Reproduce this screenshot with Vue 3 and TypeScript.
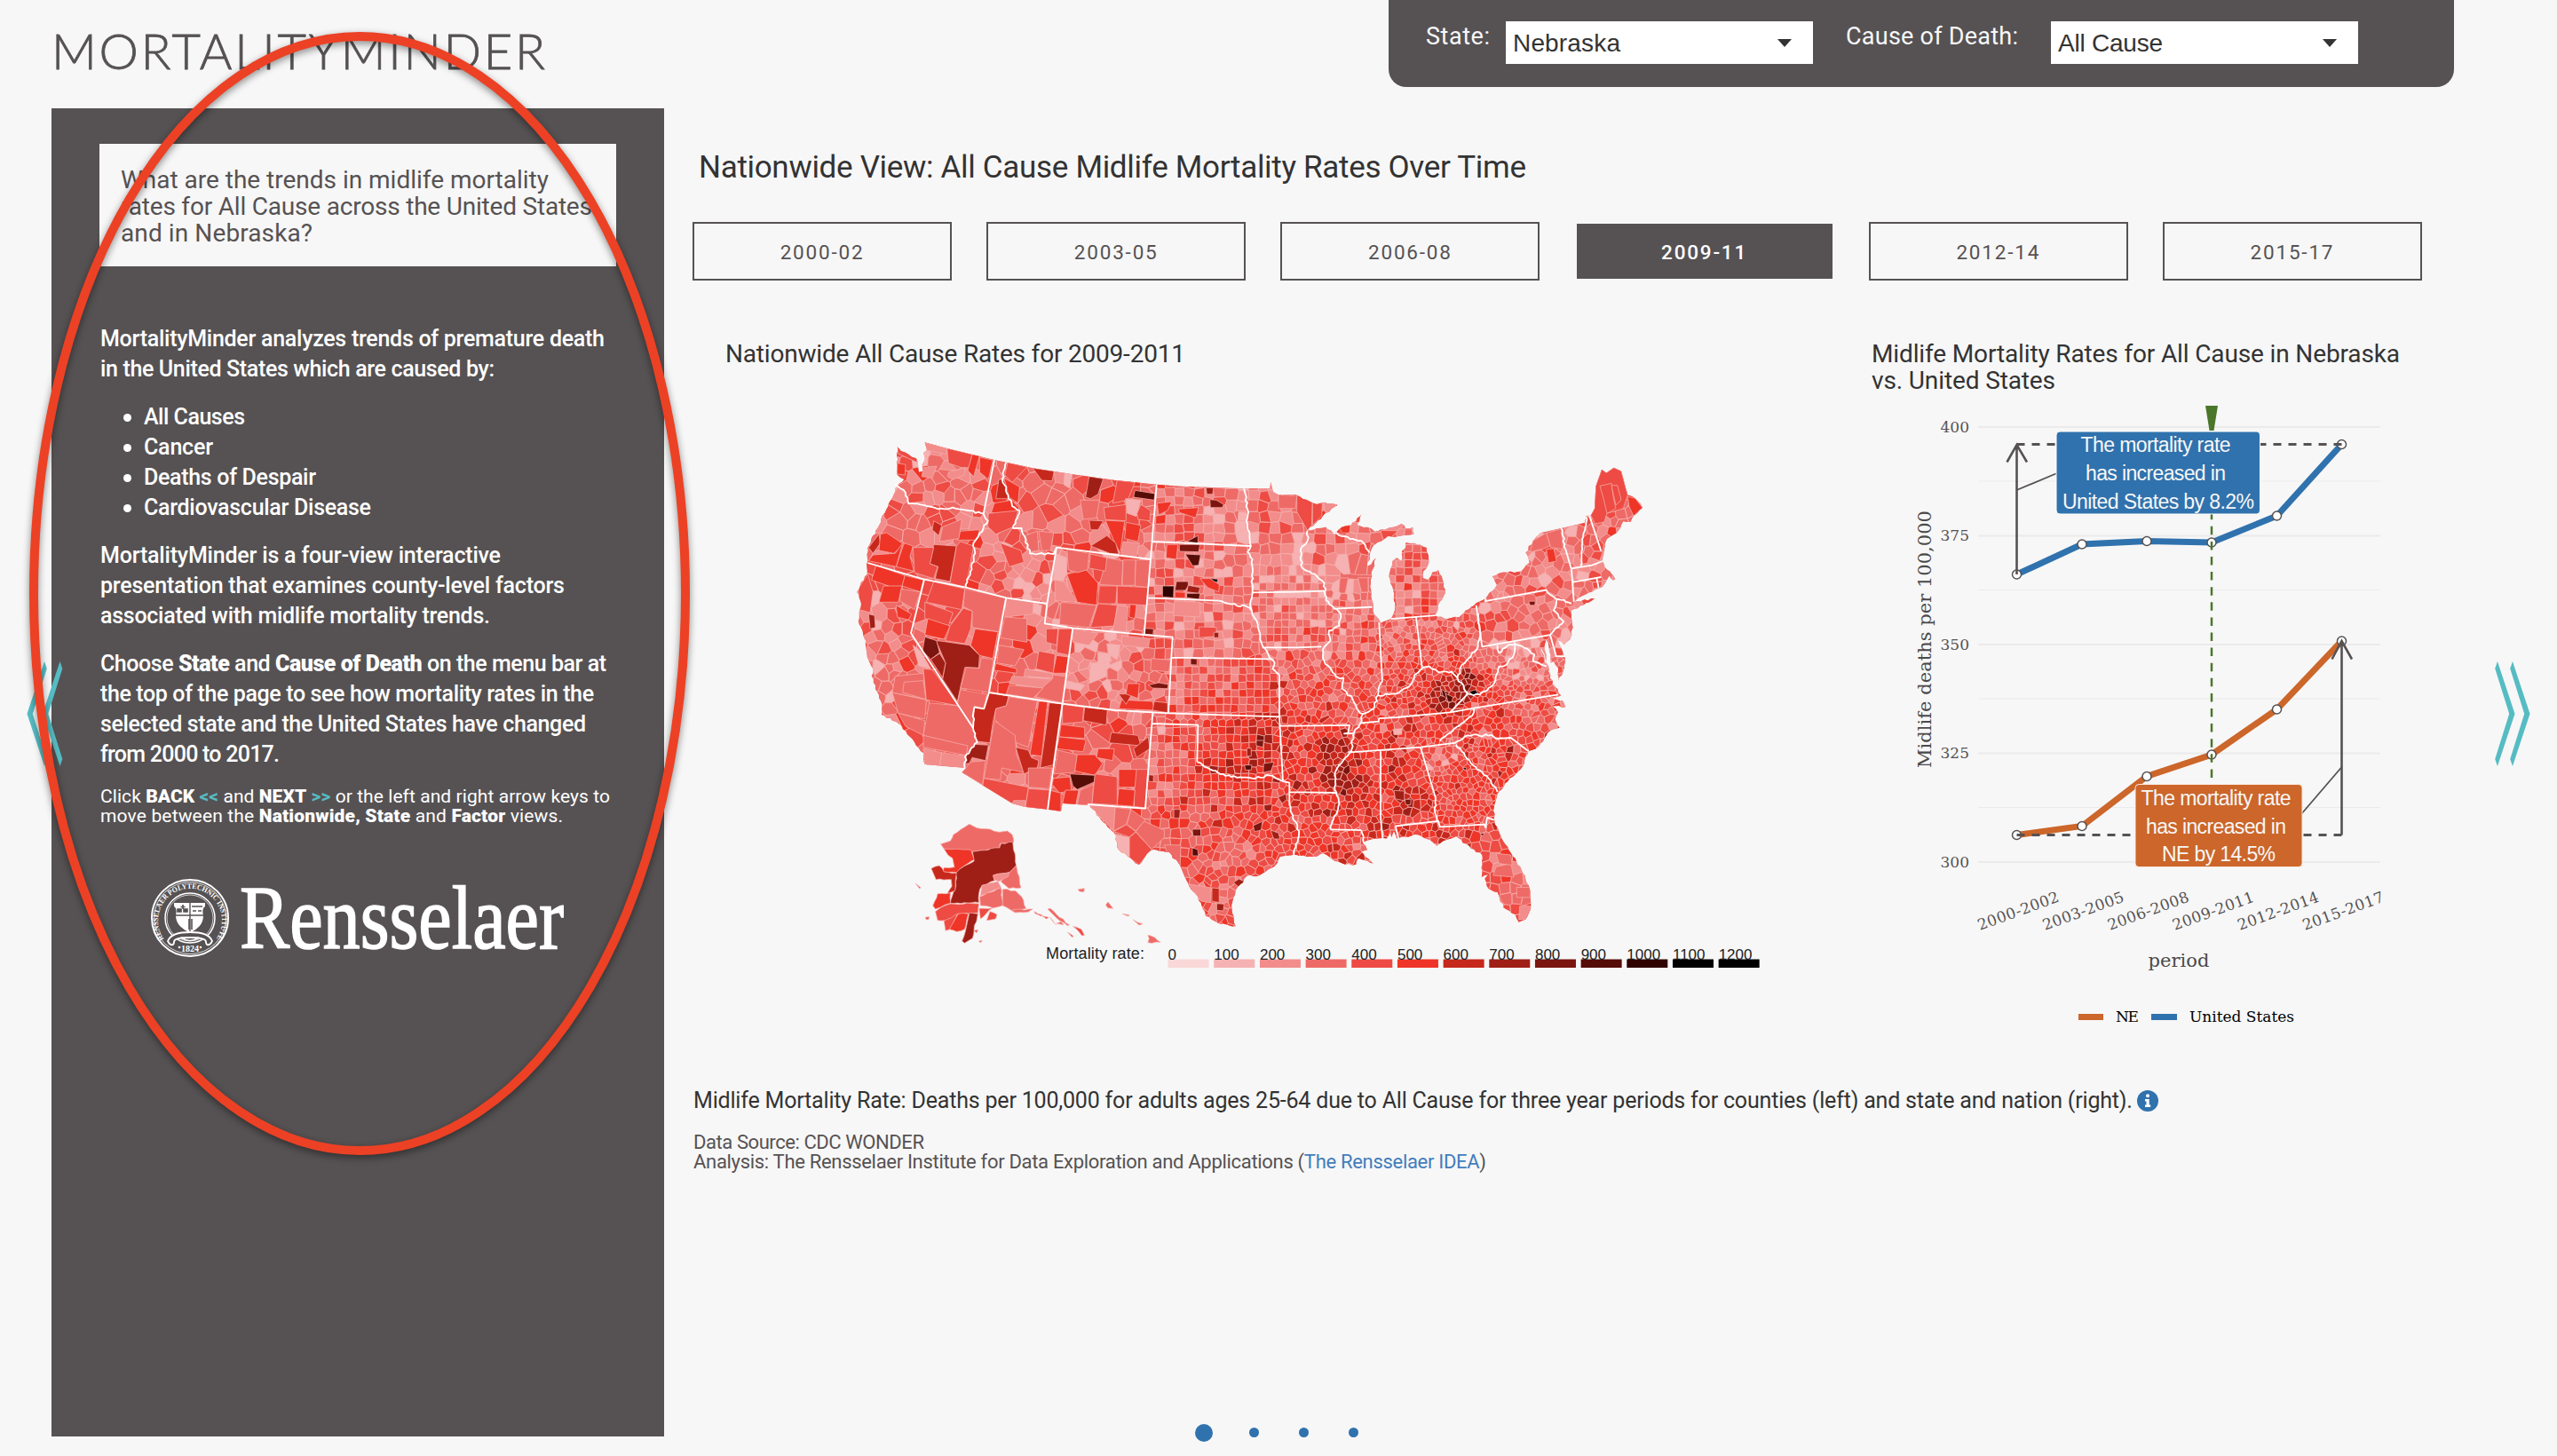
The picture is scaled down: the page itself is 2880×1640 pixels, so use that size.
<script setup lang="ts">
type Pt = [number, number]

/* Stretches or tightens a line of text to the given width in pixels. */
const vFit = {
  mounted(el: HTMLElement, binding: { value: number }) {
    const n = (el.textContent ?? '').trim().length
    const w = el.getBoundingClientRect().width
    if (n > 1) el.style.letterSpacing = `${((binding.value - w) / (n - 1)).toFixed(3)}px`
  },
}

const periods = ['2000-02', '2003-05', '2006-08', '2009-11', '2012-14', '2015-17']
const activePeriod = '2009-11'
const causes = [
  { name: 'All Causes', w: 114 },
  { name: 'Cancer', w: 78 },
  { name: 'Deaths of Despair', w: 194 },
  { name: 'Cardiovascular Disease', w: 256 },
]

/* ---------- map ---------- */
const scale = ['#fad8d8', '#f6b2b2', '#f28d8c', '#ee6a66', '#ed4b43', '#ee3527', '#c6281c', '#9f1f16', '#7b150f', '#560c07', '#300300', '#000000']
const legend = [...scale, '#000000'].map((color, i) => ({ color, label: String(i * 100), x: 1315.6 + i * 51.67 }))

/* Geometry is kept on three sheets, each with its own origin and scale. */
const sheets: Record<string, [number, number, number, number]> = {
  A: [940, 460, 3, 3],
  B: [1440, 500, 3, 2.6133],
  C: [940, 860, 2.8, 3],
}
function pts(src: string): Pt[] {
  let s = sheets.A
  const out: Pt[] = []
  for (const t of src.trim().split(/\s+/)) {
    if (sheets[t]) { s = sheets[t]; continue }
    const [x, y] = t.split(',').map(Number)
    out.push([s[0] + x / s[2], s[1] + y / s[3]])
  }
  return out
}
const line = (p: Pt[]) => 'M' + p.map(q => `${q[0].toFixed(1)} ${q[1].toFixed(1)}`).join('L')

let seed = 20117
function rnd() {
  seed = (seed + 0x6d2b79f5) | 0
  let t = Math.imul(seed ^ (seed >>> 15), 1 | seed)
  t = (t + Math.imul(t ^ (t >>> 7), 61 | t)) ^ t
  return ((t ^ (t >>> 14)) >>> 0) / 4294967296
}
/* Adds small kinks so that coasts and rivers are not ruler-straight. */
function rough(p: Pt[], amp: number, minLen: number): Pt[] {
  const out: Pt[] = []
  for (let i = 0; i < p.length - 1; i++) {
    out.push(p[i])
    const dx = p[i + 1][0] - p[i][0], dy = p[i + 1][1] - p[i][1]
    const len = Math.hypot(dx, dy)
    const n = Math.floor(len / minLen)
    for (let k = 1; k < n; k++) {
      const o = (rnd() - 0.5) * amp
      out.push([p[i][0] + (dx * k) / n - (dy / len) * o, p[i][1] + (dy * k) / n + (dx / len) * o])
    }
  }
  out.push(p[p.length - 1])
  return out
}

const coast: [string, boolean][] = [
  ['A 212,130 225,145 250,155 275,168 282,190 285,215 297,212 295,190 305,168 300,150 312,140 305,115', true],
  ['A 305,115 380,135 540,174 580,182 670,202 800,222 950,243 1088,257 1170,263 1300,268 1383,271 1470,271 1474,248 1482,282 1500,292 1540,298 1560,292', false],
  ['B 0,150 35,155 60,150 95,165 130,178 155,172 200,180 150,212 98,255 130,248 160,245 185,262 215,245 245,240 282,205 265,238 300,245 325,258 360,252 400,242 415,235 430,248 455,245 458,265 420,270 370,272 335,290 320,300 308,330 300,360 313,355 330,335 318,370 312,410 316,460 322,500 345,527 380,515 394,480 390,440 378,410 375,380 385,345 400,335 415,345 418,315 430,305 430,290 460,292 500,305 508,350 490,375 488,395 505,400 520,378 540,372 552,390 563,440 545,465 540,485 528,505 570,515 610,510 650,480 700,455 738,415 722,390 760,378 820,375 848,350 835,320 860,285 885,262', true],
  ['B 885,262 955,248 1035,232 1040,212 1055,210 1068,190 1072,125 1092,75 1108,85 1133,70 1158,80 1180,150', false],
  ['B 1180,150 1205,160 1230,188 1200,212 1190,230 1165,228 1150,255 1110,280 1100,315 1095,345 1110,370 1138,398 1132,402 1118,388 1110,400 1095,420 1060,435 1020,450 1000,465 1068,455 1030,475 990,490 995,540 985,575 965,592 945,578 955,600 968,630 965,660 945,698 945,660 930,640 920,645 915,610 905,575 898,600 905,640 893,610 888,600 900,640 910,650 918,690 935,715 955,740 925,750 960,755 970,775 925,772 945,790 935,810 950,835 910,850 880,890 845,905 825,950 765,1000 740,1030 728,1070 730,1110 760,1170 800,1220 835,1280 852,1320 852,1370 835,1400 812,1408 800,1385 760,1365 740,1320 710,1310 697,1280 708,1268 686,1275 688,1210 650,1190 600,1155 570,1165 535,1183 510,1165 460,1150 400,1162 390,1140 383,1158 375,1140 365,1162 320,1163 285,1175 300,1195 280,1200 320,1235 270,1220 262,1238 225,1238 190,1228 150,1205 120,1215 60,1210 30,1212 C 1450,308 1405,315 1390,345 1340,378 1300,380 1265,430 1252,480 1265,550 1210,540 1170,515 1155,470 1115,405 1090,345 1055,300 1005,290 985,305 960,342 925,315 895,290 882,235 840,190 802,138', true],
  ['A 855,1340 770,1335 765,1362 720,1355 645,1347 600,1335 430,1230 445,1215 305,1203', false],
  ['A 305,1203 300,1165 255,1110 215,1065 158,1035 160,1000 125,905 130,880 110,840 105,785 80,720 90,660 75,620 110,560 112,470 150,395 190,310 205,270 235,240 212,225 212,130', true],
]
const outline = line(coast.flatMap(([s, r]) => (r ? rough(pts(s), 2.2, 3.5) : pts(s)))) + 'Z'

const straightBorders = [
  'A 540,174 503,356', 'A 112,522 303,578 443,605 580,640 718,660', 'A 303,578 258,760 468,1080',
  'A 472,1010 505,1015 522,960', 'A 580,638 522,960', 'A 522,960 770,998 950,1020 1128,1030', 'A 770,998 720,1355',
  'A 805,742 770,998', 'A 718,660 710,727 805,742 1046,765', 'A 750,470 718,660', 'A 750,470 1068,510 1046,765',
  'A 1088,257 1068,510', 'A 1073,450 1405,465', 'A 1058,640 1300,650', 'A 1046,765 1142,773 1138,842 1480,847',
  'A 1412,622 1560,620 B 155,433', 'A 1445,808 1560,808 B 145,597', 'A 1138,842 1128,1030 1503,1042 1503,900',
  'A 1070,1065 1228,1070 1225,1195', 'A 1075,1030 1050,1352 855,1338', 'A 1503,1042 1515,1260 1537,1265 1537,1340',
  'A 1503,1073 1560,1073 B 240,828 235,851 222,853 255,852', 'B 185,485 316,480', 'B 340,525 350,690',
  'B 465,510 485,660', 'B 380,515 530,505', 'B 668,475 688,597 918,562', 'B 700,455 698,463 905,430',
  'B 918,562 938,625 968,625', 'B 275,822 338,817 340,808 400,805 580,790 660,778 945,738', 'B 235,908 480,893 600,880',
  'B 720,857 735,868 785,865 845,905', 'B 480,893 530,1040', 'B 345,905 345,1100 352,1160', 'B 395,1125 540,1110 545,1127 695,1120 700,1130 705,1100 728,1107',
  'B 395,1125 405,1160', 'B 175,1135 280,1137', 'B 38,1025 195,1027', 'B 1050,210 1090,315', 'B 990,367 1060,357 1095,345',
  'B 995,407 1090,392', 'B 1075,395 1082,425', 'B 970,310 990,370 998,465', 'B 580,790 640,735',
].map(s => line(pts(s))).join('')
const riverBorders = [
  'A 205,258 240,285 250,322 290,325 350,340 400,335 450,345 503,356', 'A 503,356 518,380 480,440 468,465 475,490 443,605',
  'A 468,1080 482,1128 445,1170 440,1215', 'A 468,1080 472,1010', 'A 580,182 567,240 600,330 625,345 603,405 632,405 660,490 740,492 750,470',
  'A 1300,650 1340,662 1390,668 1410,685 1430,730 1445,800 1487,860 1480,880 1503,900', 'A 1383,271 1395,340 1395,400 1407,465 1395,485 1412,510 1410,640 1405,670 1410,685',
  'A 1225,1195 1270,1220 1340,1245 1410,1250 1470,1240 1515,1260', 'A 1537,1340 B 40,1080 70,1140 52,1210',
  'B 98,255 98,285 75,310 80,365 130,390 155,410 160,460 210,500 205,535 170,550 175,580 150,605 155,640 195,685 220,690 215,720 250,750 270,785 285,795 275,825 255,850 245,905 195,960 190,1010 205,1060 175,1135',
  'B 185,262 215,272 280,285 308,320', 'B 350,690 335,740', 'B 285,795 320,780 335,740 400,735 440,715 460,680 485,660 510,655 540,672 585,670 605,690 620,650 670,605 680,570 675,500',
  'B 905,430 935,455 990,470', 'B 940,458 930,490 963,522 918,562', 'B 740,593 745,615 780,590 800,590 795,620 770,650 745,655 725,710 680,738 640,735 605,690',
  'B 795,585 830,600 865,620 860,640 905,655', 'B 660,778 655,800 610,830 545,875', 'B 595,880 640,858 720,857', 'B 600,885 650,940 710,985 740,1025',
  'B 530,1040 528,1080 542,1115', 'B 280,1137 288,1175', 'B 955,248 970,310', 'B 1040,215 1035,255 1025,300 1022,360',
].map(s => line(rough(pts(s), 2.4, 3))).join('')

/* County seeds: x0, y0, x1, y1, step x, step y, jitter. Earlier zones win. */
const zones = [
  [1758, 523, 1855, 690, 11, 10, 0.4], [1660, 590, 1775, 730, 11, 10, 0.4], [1563, 605, 1632, 700, 9.4, 8.6, 0.08],
  [1380, 540, 1563, 640, 12.5, 12, 0.22], [1410, 640, 1500, 735, 8.3, 8.3, 0.08], [1290, 540, 1410, 742, 11, 10, 0.14],
  [1316, 742, 1440, 810, 8.8, 8.6, 0.08], [1295, 810, 1440, 915, 8.6, 8.8, 0.14], [1230, 900, 1340, 1050, 11, 11, 0.14],
  [1340, 905, 1425, 1050, 9.2, 9, 0.42], [1550, 700, 1760, 790, 6.8, 6.6, 0.4], [1600, 835, 1690, 935, 6.8, 6.6, 0.4],
  [1655, 935, 1740, 1045, 12, 12, 0.25], [1424, 735, 1855, 1045, 8.2, 8, 0.34], [1500, 660, 1760, 760, 8.2, 8, 0.2],
  [1000, 490, 1110, 600, 14, 13, 0.42], [1110, 600, 1210, 690, 13, 11, 0.42], [960, 690, 1040, 800, 13, 11, 0.42],
  [1200, 700, 1316, 810, 13, 11, 0.35], [940, 480, 1316, 940, 20, 17, 0.38],
]
/* Local departures from the national average: x, y, radius, shift. */
const blobs = [
  [1632, 785, 17, 3.2], [1656, 768, 12, 3], [1512, 868, 16, 1.9], [1504, 835, 13, 1.4], [1514, 885, 12, 1.3], [1580, 903, 26, 1.2], [1570, 880, 110, 0.8],
  [1693, 862, 26, 1.1], [1645, 900, 40, 0.7], [1480, 690, 65, -0.9], [1460, 630, 35, -0.7], [1623, 860, 13, -2.4],
  [1715, 735, 24, -1.4], [1405, 843, 32, 1.6], [1240, 745, 28, -1.4], [1760, 660, 70, -0.5], [1370, 850, 90, 0.5], [1600, 795, 40, 0.7],
  [1400, 930, 50, 0.6], [1350, 720, 60, -0.5], [1345, 590, 60, -0.4], [1460, 790, 60, 0.5], [1500, 920, 60, 0.7], [1385, 960, 24, -0.9],
  [1000, 730, 40, -0.4], [1150, 650, 40, -0.4], [1060, 550, 70, -0.25], [1570, 620, 40, -0.2], [1750, 790, 60, 0.4], [1595, 625, 12, 1.2], [1540, 700, 60, 0.1], [1680, 1000, 50, 0.2],
]
function cells(): string[] {
  const sites: { x: number; y: number; s: number; c: number }[] = []
  zones.forEach(([x0, y0, x1, y1, sx, sy, j], zi) => {
    let row = 0
    for (let y = y0 + sy / 2; y < y1; y += sy, row++) {
      for (let x = x0 + sx / 2 + (j > 0.3 && row % 2 ? sx / 2 : 0); x < x1; x += sx) {
        if (zones.slice(0, zi).some(z => x > z[0] && x < z[2] && y > z[1] && y < z[3])) continue
        let m = 3.15
        for (const [bx, by, r, v] of blobs) m += v * Math.exp(-((x - bx) ** 2 + (y - by) ** 2) / (2 * r * r))
        m += (rnd() + rnd() + rnd() - 1.5) * 1.7
        sites.push({ x: x + (rnd() - 0.5) * 2 * j * sx, y: y + (rnd() - 0.5) * 2 * j * sy, s: Math.max(sx, sy), c: Math.max(1, Math.min(10, Math.round(m))) })
      }
    }
  })
  const out = scale.map(() => '')
  for (const a of sites) {
    const r = a.s * 1.5
    let poly: Pt[] = [[a.x - r, a.y - r], [a.x + r, a.y - r], [a.x + r, a.y + r], [a.x - r, a.y + r]]
    for (const b of sites) {
      const dx = b.x - a.x, dy = b.y - a.y
      if (b === a || Math.abs(dx) > 3.4 * a.s || Math.abs(dy) > 3.4 * a.s) continue
      const k = (dx * (a.x + b.x) + dy * (a.y + b.y)) / 2
      const next: Pt[] = []
      for (let i = 0; i < poly.length; i++) {
        const p = poly[i], q = poly[(i + 1) % poly.length]
        const dp = p[0] * dx + p[1] * dy - k, dq = q[0] * dx + q[1] * dy - k
        if (dp <= 0) next.push(p)
        if (dp < 0 !== dq < 0 && dp !== dq) {
          const t = dp / (dp - dq)
          next.push([p[0] + (q[0] - p[0]) * t, p[1] + (q[1] - p[1]) * t])
        }
      }
      poly = next
      if (poly.length < 3) break
    }
    if (poly.length > 2) out[a.c] += line(poly) + 'Z'
  }
  return out
}
const countyPaths = cells()

/* Large counties drawn individually: rate class, then the ring. */
const bigCounties = (`4 A 380,135 465,155 455,200 430,200 385,185|5 A 465,155 490,160 470,230 450,210|5 A 490,165 535,175 520,240 490,215|2 A 305,115 380,135 378,155 305,140
2 A 300,200 345,195 330,235 295,230|2 A 385,215 440,200 440,225 400,240 382,230|4 A 212,130 280,170 278,182 214,152|5 A 212,185 240,190 238,225 212,222|4 A 585,183 650,198 600,250 575,225
6 A 670,202 742,212 735,245 700,243|2 A 742,212 778,218 775,255 745,250|1 A 778,218 803,222 795,270 775,258|7 A 860,230 908,238 890,290 865,305 848,300|4 A 955,243 1015,250 990,310 940,320|9 A 1015,277 1082,288 1080,310 1010,300
1 A 983,305 1035,310 1020,365 990,355|4 A 1035,325 1068,345 1065,380 1025,375 1022,355|5 A 985,385 1035,395 1025,450 980,440|6 A 860,378 908,380 890,410 865,410|5 A 915,378 980,382 965,490 945,450|6 A 865,465 920,430 950,455 960,492 930,490|2 A 975,450 1030,455 1020,503 968,497|3 A 830,310 895,310 885,370 840,375|4 A 910,335 985,325 985,380 915,376
6 A 555,240 570,240 620,320 580,305 545,305|5 A 540,320 600,310 625,340 570,375 530,350|4 A 520,355 620,345 605,400 545,425 518,400|5 A 572,235 625,265 620,320 590,300|3 A 645,430 685,415 690,480 660,485|3 A 690,415 740,420 730,480 700,480|4 A 560,455 630,480 640,520 590,535
6 A 335,460 412,465 390,585 340,575 350,535 322,525|5 A 235,455 265,465 255,500 268,550 208,535|4 A 265,470 335,470 322,525 348,535 335,575 270,555|4 A 425,450 470,465 443,605 390,590 412,466|6 A 115,470 150,425 155,455 130,490|6 A 335,380 362,395 352,430 330,410|5 A 155,425 175,420 235,460 200,490 150,480|5 A 425,415 490,410 480,445 415,445|5 A 130,495 205,490 230,455 208,535 115,515|3 A 365,400 430,375 420,440 355,450
5 A 140,530 238,565 225,615 125,580|5 A 238,565 300,580 290,620 228,600|5 A 165,600 228,600 215,655 150,655|3 A 225,610 290,620 270,680 220,650|7 A 115,695 135,700 138,740 120,745|4 A 80,610 112,560 130,620 120,690 85,680|5 A 208,665 260,695 250,715 212,705
4 A 300,880 330,883 420,1005 310,985|1 A 265,800 290,820 325,880 285,870|3 A 320,995 420,1005 468,1075 480,1125 450,1165 300,1105|3 A 195,960 310,985 305,1050 215,1030|3 A 215,1030 305,1055 300,1105 240,1075|3 A 300,1105 450,1140 445,1172 300,1145|2 A 300,1150 362,1163 355,1210 305,1203|2 A 362,1163 450,1175 440,1215 356,1210|3 A 205,905 300,895 308,983 195,960|3 A 235,925 300,920 308,983 230,960
4 A 335,585 440,610 430,680 310,655|3 A 440,610 578,640 555,755 465,740 465,685 435,670|4 A 305,655 400,690 385,735 305,710|5 A 315,710 390,735 370,780 305,765|5 A 475,745 552,755 535,845 490,835 460,800|4 A 390,735 435,675 465,685 460,745 440,795 375,785|8 A 305,772 345,785 355,825 325,848 297,820|7 A 350,785 455,800 490,835 487,877 440,875 415,990 365,915 375,860 345,790|7 A 325,848 355,828 375,860 365,910|3 A 445,875 490,878 495,843 537,848 520,960 425,945|3 A 425,950 515,965 505,1015 472,1005 468,1075 415,1000
2 A 580,640 680,655 670,695 575,705|3 A 575,705 650,710 650,790 560,775|3 A 555,800 640,815 610,870 548,860|5 A 545,862 615,880 615,895 540,885|4 A 690,820 745,830 740,895 680,880|5 A 750,835 790,840 782,895 738,895|3 A 735,900 782,905 770,995 680,975|2 A 645,880 735,895 738,912 640,905|2 A 600,905 735,915 700,945 590,930|3 A 590,935 705,945 670,980 580,965|1 A 672,658 700,665 695,700 670,690|4 A 757,745 803,745 795,835 750,825|4 A 715,745 755,745 750,800 715,790
1 A 745,490 785,505 785,560 770,585 738,580|2 A 745,580 775,585 820,655 745,650|5 A 785,560 850,545 890,590 885,665 820,655|3 A 785,475 860,490 855,545 820,555 790,545|3 A 765,655 885,665 860,740 760,730|4 A 895,600 955,600 950,660 890,660|4 A 890,660 955,665 945,735 865,740|3 A 920,505 975,515 970,600 895,595|2 A 958,665 992,670 985,755 940,750|3 A 975,512 1018,512 1015,598 972,598|3 A 1018,512 1066,512 1060,605 1015,600|4 A 955,600 1060,605 1055,665 955,660|5 A 998,662 1020,664 1015,710 995,705|4 A 865,492 920,505 915,550 860,540
1 A 865,860 915,860 920,905 860,930|2 A 805,745 890,760 860,800 805,790|1 A 890,825 930,830 935,855 890,860|8 A 1060,935 1095,927 1128,933 1125,947 1075,945|5 A 970,985 1075,990 1080,1020 960,1015|6 A 1080,990 1125,995 1125,1028 1075,1020|6 A 960,965 1005,965 985,1000|5 A 990,930 1030,930 1025,980 985,965|1 A 785,920 845,935 830,955 780,945|1 A 920,795 965,800 955,850 925,830|3 A 1070,845 1135,850 1130,890 1068,885|2 A 970,768 1065,778 1060,810 970,800
6 A 522,960 588,972 580,1005 545,1015 535,1060 525,1130 482,1125 468,1080 472,1010 505,1015|7 A 470,1135 520,1138 510,1190 465,1180 455,1200 442,1200 445,1170|5 A 690,990 720,990 700,1175 660,1170|6 A 725,995 768,998 738,1205 695,1215 715,1080|3 A 590,975 685,988 655,1145 615,1130 540,1050 545,1015 580,1005|3 A 540,1055 610,1105 615,1170 640,1230 565,1215 560,1255 505,1250 525,1140|6 A 612,1145 655,1155 665,1180 690,1190 685,1215 640,1235|4 A 505,1250 655,1280 645,1347 600,1335 500,1275|3 A 430,1230 460,1195 510,1190 500,1272|3 A 655,1215 735,1215 725,1285 655,1280|4 A 655,1285 728,1290 720,1357 645,1347|2 A 605,1325 645,1325 643,1347 600,1336
4 A 770,1000 842,1010 838,1060 770,1065|6 A 845,1010 922,1018 918,1070 840,1055|5 A 765,1068 845,1078 845,1115 760,1110|5 A 760,1110 850,1120 840,1160 750,1150|6 A 935,1095 1025,1105 1035,1140 928,1130|6 A 1060,1110 1065,1150 1020,1180 1010,1150|3 A 755,1155 820,1170 812,1230 742,1235|5 A 820,1170 880,1170 905,1200 880,1240 812,1225|5 A 890,1150 945,1150 940,1190 885,1180|5 A 740,1250 795,1245 800,1290 760,1300 735,1270|9 A 795,1235 880,1240 878,1262 820,1288 805,1275|5 A 725,1290 765,1300 765,1362 722,1357|5 A 780,1290 825,1290 815,1340 770,1335|3 A 830,1290 875,1270 870,1340 820,1340|4 A 880,1235 955,1245 955,1340 870,1335|4 A 1015,1220 1058,1220 1050,1350 1012,1345|5 A 960,1220 1020,1220 1015,1280 960,1280|5 A 960,1285 1015,1290 1010,1345 955,1340
9 A 1190,450 1228,430 1228,455|8 A 1165,460 1235,460 1230,485 1165,483|9 A 1185,492 1237,495 1230,530 1210,532|11 A 1270,575 1295,577 1293,588 1275,586|10 A 1108,600 1147,600 1145,640 1108,637|8 A 1155,585 1195,585 1195,600 1185,615 1150,615|7 A 1195,598 1235,605 1230,625 1190,620|9 A 1190,625 1235,625 1232,645 1190,640|5 A 1150,620 1185,622 1185,640 1150,640|5 A 1235,575 1268,575 1300,595 1298,620 1260,605|8 A 1268,308 1290,310 1315,325 1310,335 1270,335|7 A 1255,268 1280,268 1278,290 1258,290|5 A 1162,340 1230,335 1220,370 1165,352|5 A 1090,320 1140,315 1125,345 1095,360|5 A 1123,460 1160,460 1155,510 1120,505|2 A 1148,650 1235,655 1235,705 1145,700|8 A 1050,743 1078,745 1076,765 1048,763|4 A 1232,738 1290,740 1290,770 1232,775|7 A 1282,757 1298,757 1298,775 1282,775|1 A 1365,350 1392,350 1392,378 1363,378
8 A 1203,845 1225,847 1225,867 1203,866|7 A 1062,1238 1078,1240 1077,1262 1061,1260|8 A 1425,1122 1450,1122 1448,1145 1425,1140|8 A 1450,1200 1485,1195 1475,1225 1448,1230|9 A 1385,1205 1410,1205 1408,1222 1388,1222|7 A 1393,1148 1408,1148 1408,1175 1393,1175
2 C 802,138 885,148 880,228 845,190|3 C 885,148 935,155 920,205 880,228|4 C 880,230 920,207 950,230 930,248|1 C 880,238 930,250 930,318 895,290|4 C 930,250 950,232 1000,290 960,342 930,318|3 C 950,230 975,195 1040,225 1040,250 1000,290|3 C 935,155 980,190 950,228 922,205|8 C 1128,222 1155,222 1155,245 1130,245|9 C 1128,285 1145,290 1148,312 1128,312|6 C 1190,420 1213,422 1213,470 1190,465|2 C 1118,408 1160,415 1188,420 1185,470 1155,465|7 C 1070,155 1090,155 1088,185 1070,185|3 C 1040,275 1092,275 1090,345 1050,305|7 C 1205,473 1228,475 1226,498 1205,496|7 C 1258,402 1275,390 1295,400 1275,418|8 C 1320,210 1350,195 1345,225 1325,230|7 C 1375,225 1400,235 1405,255 1385,255
11 B 645,729 665,724 675,735 658,741|11 B 622,953 635,953 632,962|10 B 680,1148 695,1146 690,1154|8 B 427,1046 448,1046 446,1062 430,1062|7 B 390,1020 425,1022 425,1050 395,1045|9 B 550,722 562,728 570,750 556,742|9 B 565,735 590,745 585,760 572,758|8 B 845,463 868,463 866,475 850,475|5 B 905,310 930,308 940,345 912,350
4 B 1055,210 1068,190 1072,125 1092,75 1108,85 1133,70 1158,80 1180,150 1165,190 1110,205 1100,230 1070,235|4 B 1086,124 1125,116 1132,160 1140,190 1110,205 1098,160|4 B 1125,122 1145,122 1158,165 1140,180 1132,150|5 B 1180,155 1205,160 1230,188 1200,212 1185,185|4 B 62,150 115,170 112,240 98,255 62,200|4 B 115,172 148,175 146,212 115,240|3 B 0,150 62,152 58,190 0,190|5 B 205,245 243,238 240,262 215,262|3 B 860,285 905,262 918,300 890,310 850,318|3 B 905,262 955,250 962,310 920,305|1 B 388,840 418,838 416,855 390,856|3 B 805,1305 850,1305 850,1335 805,1335|2 B 815,1360 850,1360 850,1398 812,1400|3 B 735,1245 785,1235 795,1275 725,1270|3 B 735,1205 785,1210 790,1240 745,1235`)
  .split(/[|\n]/).map(s => {
    const i = s.indexOf(' ')
    return { color: scale[Number(s.slice(0, i))], d: line(pts(s.slice(i + 1))) + 'Z' }
  })

/* Alaska and Hawaii */
const farStates = (`3 335,272 365,262 375,240 410,215 425,205 450,218 490,222 520,232 545,228 560,240 565,266 522,270 520,285 435,298 345,288
7 435,298 520,285 525,270 562,265 573,345 550,370 500,378 505,395 465,412 455,440 455,470 365,472 380,425 385,362 440,330
5 345,288 430,292 440,325 410,345 385,368 342,366 345,352 378,350 372,320 358,310
6 305,355 330,345 345,366 384,370 380,430 355,440 370,415 368,392 320,392
3 573,345 588,420 550,422 525,400 550,370
2 500,378 550,367 548,382 520,398 503,393
2 465,412 515,398 525,420 460,448
3 458,450 525,420 530,480 500,488 460,480
3 530,425 570,430 590,450 604,490 565,502 530,480
5 310,480 325,440 365,437 366,472 335,485 318,492
4 318,500 335,487 366,474 455,474 452,505 390,508 360,530 325,530
4 345,532 388,508 365,560 350,565
5 390,508 422,508 410,560 385,568 362,560
7 425,505 452,508 440,560 435,590 410,607 402,600 412,570
4 456,490 498,488 460,525
4 490,500 512,510 508,525 480,530
3 560,495 625,492 610,502 570,504
4 255,405 272,420 268,422
4 286,520 298,518 297,526 290,528
4 440,565 452,562 448,572
4 630,500 655,512 652,516 632,506
4 655,515 675,520 668,525
3 672,492 680,490 700,510 740,545 735,548 700,522
4 680,520 700,545 694,540
4 752,550 778,560 788,580 780,582 765,562
4 735,570 752,582 750,588
3 700,540 722,545 715,535
3 768,425 788,422 786,434 772,432
3 855,478 862,468 878,490 862,488
3 908,508 930,512 925,516
3 942,528 972,542 960,546
3 988,580 1010,588 1028,604 988,605 992,592
3 455,600 466,598 460,606`).split('\n').map(s => {
  const i = s.indexOf(' ')
  return { color: scale[Number(s.slice(0, i))], d: line(rough(pts('C ' + s.slice(i + 1)), 1.6, 4)) + 'Z' }
})

/* ---------- trend chart ---------- */
const xs = [2271.5, 2345, 2418, 2491, 2564.5, 2637.5]
const us = [647, 613, 609.5, 611, 581, 500.5]
const ne = [940.5, 930.5, 874.5, 850, 799, 722]
const poly = (ys: number[]) => ys.map((y, i) => `${xs[i]},${y}`).join(' ')
const ticks = [400, 375, 350, 325, 300].map((v, i) => ({ v, y: 481 + i * 122.5 }))
const minor = [542, 664.5, 787, 909.5]
const years = ['2000-2002', '2003-2005', '2006-2008', '2009-2011', '2012-2014', '2015-2017']
</script>

<template>
  <div class="page">
    <header class="top">
      <h1 class="brand"><span v-fit="556" class="ln">MORTALITYMINDER</span></h1>
      <form class="filters">
        <label class="lab lab-state"><span v-fit="72" class="ln">State:</span></label>
        <div class="select"><span v-fit="121" class="ln">Nebraska</span><i class="caret"></i></div>
        <label class="lab lab-cause"><span v-fit="194" class="ln">Cause of Death:</span></label>
        <div class="select"><span v-fit="118" class="ln">All Cause</span><i class="caret"></i></div>
      </form>
    </header>

    <div class="body">
      <aside class="side">
        <h2 class="question">
          <span v-fit="482" class="ln">What are the trends in midlife mortality</span>
          <span v-fit="531" class="ln">rates for All Cause across the United States</span>
          <span v-fit="216" class="ln">and in Nebraska?</span>
        </h2>
        <p class="para first">
          <span v-fit="568" class="ln">MortalityMinder analyzes trends of premature death</span>
          <span v-fit="444" class="ln">in the United States which are caused by:</span>
        </p>
        <ul class="causes">
          <li v-for="c in causes" :key="c.name"><span v-fit="c.w" class="ln">{{ c.name }}</span></li>
        </ul>
        <p class="para">
          <span v-fit="451" class="ln">MortalityMinder is a four-view interactive</span>
          <span v-fit="523" class="ln">presentation that examines county-level factors</span>
          <span v-fit="439" class="ln">associated with midlife mortality trends.</span>
        </p>
        <p class="para">
          <span v-fit="570" class="ln">Choose <b>State</b> and <b>Cause of Death</b> on the menu bar at</span>
          <span v-fit="556" class="ln">the top of the page to see how mortality rates in the</span>
          <span v-fit="547" class="ln">selected state and the United States have changed</span>
          <span v-fit="202" class="ln">from 2000 to 2017.</span>
        </p>
        <p class="hint">
          <span v-fit="574" class="ln">Click <b>BACK</b> <em>&lt;&lt;</em> and <b>NEXT</b> <em>&gt;&gt;</em> or the left and right arrow keys to</span>
          <span v-fit="521" class="ln">move between the <b>Nationwide, State</b> and <b>Factor</b> views.</span>
        </p>
        <svg class="rpi" viewBox="164 970 500 130" width="500" height="130">
          <defs>
            <path id="ringTop" d="M184.500 1057.500A36 36 0 1 1 243.500 1057.500" />
          </defs>
          <g fill="none" stroke="#fff">
            <circle cx="214" cy="1034" r="43" stroke-width="2" />
            <circle cx="214" cy="1034" r="40.500" stroke-width=".8" />
            <circle cx="214" cy="1034" r="28" stroke-width="1.500" />
            <circle cx="214" cy="1034" r="26" stroke-width=".7" />
          </g>
          <text class="seal"><textPath href="#ringTop" textLength="156" lengthAdjust="spacingAndGlyphs">RENSSELAER POLYTECHNIC INSTITUTE</textPath></text>
          <path d="M196 1017h35v4c-3 2-3 6-2 10 0 10-6 15-15 20-9-5-16-10-16-20 1-4 1-8-2-10z" fill="#fff" />
          <path d="M214 1017v34M198 1031h32" stroke="#565253" stroke-width="1.400" />
          <path d="M206 1019v5M203.500 1021.500h5M200 1024h4v3h-4zM207 1024h4v3h-4zM216 1021h12M217 1026h4M223 1026h4M213 1035v12M216 1035v12" stroke="#565253" stroke-width="1.600" fill="#565253" />
          <path d="M189 1060c3-8 12-10 25-10s22 2 25 10c-3 6-7 5-7 1 0-3-6-5-18-5s-18 2-18 5c0 4-4 5-7-1z" fill="#565253" stroke="#fff" stroke-width="1.800" />
          <path d="M204 1056q10 7 20 0" fill="none" stroke="#fff" stroke-width="1.600" />
          <circle cx="202" cy="1067" r="1.300" fill="#fff" /><circle cx="226" cy="1067" r="1.300" fill="#fff" />
          <text x="214" y="1072" class="seal year">1824</text>
          <text x="270" y="1067.500" class="wordmark" textLength="365" lengthAdjust="spacingAndGlyphs">Rensselaer</text>
        </svg>
      </aside>

      <main class="main">
        <h2 class="title"><span v-fit="932" class="ln">Nationwide View: All Cause Midlife Mortality Rates Over Time</span></h2>
        <nav class="tabs">
          <button v-for="p in periods" :key="p" type="button" class="tab" :class="{ on: p === activePeriod }">{{ p }}</button>
        </nav>

        <div class="charts">
          <section class="national">
            <h3><span v-fit="518" class="ln">Nationwide All Cause Rates for 2009-2011</span></h3>
            <svg viewBox="780 413 1240 700" width="1240" height="700">
              <defs><clipPath id="land"><path :d="outline" /></clipPath></defs>
              <g clip-path="url(#land)">
                <path :d="outline" fill="#ee6a66" />
                <g stroke="#f6aeab" stroke-width=".75" stroke-linejoin="round">
                  <path v-for="(d, i) in countyPaths" :key="i" :d="d" :fill="scale[i]" />
                  <path v-for="(c, i) in bigCounties" :key="'b' + i" :d="c.d" :fill="c.color" />
                </g>
              </g>
              <g stroke="#f6aeab" stroke-width=".7">
                <path v-for="(c, i) in farStates" :key="i" :d="c.d" :fill="c.color" />
              </g>
              <g fill="none" stroke="#fff" stroke-width="1.800" stroke-linejoin="round">
                <path :d="straightBorders" />
                <path :d="riverBorders" />
              </g>
              <g class="maplegend">
                <text x="1178" y="1080" textLength="111">Mortality rate:</text>
                <rect v-for="l in legend" :key="l.label" :x="l.x" y="1080.500" width="46" height="9.500" :fill="l.color" />
                <text v-for="l in legend" :key="'t' + l.label" :x="l.x" y="1080.500" class="num">{{ l.label }}</text>
              </g>
            </svg>
          </section>

          <section class="trend">
            <h3>
              <span v-fit="595" class="ln">Midlife Mortality Rates for All Cause in Nebraska</span>
              <span v-fit="207" class="ln">vs. United States</span>
            </h3>
            <svg viewBox="2109 443 619 720" width="619" height="720">
              <g stroke="#ebebeb">
                <line v-for="t in ticks" :key="t.v" x1="2228" x2="2681" :y1="t.y" :y2="t.y" stroke-width="2.200" />
                <line v-for="m in minor" :key="m" x1="2228" x2="2681" :y1="m" :y2="m" stroke-width="1.200" />
              </g>
              <g class="axis">
                <text v-for="t in ticks" :key="t.v" x="2218" :y="t.y + 5.500" text-anchor="end">{{ t.v }}</text>
                <text v-for="(y, i) in years" :key="y" :transform="`translate(${2230 + i * 73.2} 1048) rotate(-20)`" textLength="96">{{ y }}</text>
                <text class="name" transform="translate(2174.500 720) rotate(-90)" text-anchor="middle" textLength="290">Midlife deaths per 100,000</text>
                <text class="name" x="2454" y="1089" text-anchor="middle" textLength="69">period</text>
              </g>
              <polyline :points="poly(us)" fill="none" stroke="#3072ad" stroke-width="7" />
              <polyline :points="poly(ne)" fill="none" stroke="#cc662a" stroke-width="7" />
              <g fill="#fff" stroke="#565253" stroke-width="1.500">
                <circle v-for="(y, i) in us" :key="i" :cx="xs[i]" :cy="y" r="5" />
                <circle v-for="(y, i) in ne" :key="'n' + i" :cx="xs[i]" :cy="y" r="5" />
              </g>
              <g fill="none" stroke="#565253" stroke-width="2.800">
                <path d="M2271.500 500.500H2638M2271.500 940.500H2638" stroke-dasharray="9 8" />
                <path d="M2271.500 647V501M2260.500 520.500L2271.500 501L2283 520.500M2637.500 940.500V722M2626.500 742.500L2637.500 722L2649 742.500" stroke-width="2.600" />
                <path d="M2271.500 552L2318 532.500M2637.500 864L2592 917" stroke-width="1.800" />
              </g>
              <path d="M2491 887V500" stroke="#4b772b" stroke-width="2.500" stroke-dasharray="9.500 7.600" stroke-dashoffset="6" />
              <path d="M2484 457H2498L2493.500 485H2488.500Z" fill="#4b772b" />
              <rect x="2316" y="486" width="229.500" height="93" rx="4" fill="#3072ad" stroke="#fff" stroke-width="1" />
              <rect x="2405" y="883.500" width="188" height="93" rx="4" fill="#cc662a" stroke="#fbe9df" stroke-width="1" />
              <g class="note">
                <text x="2428" y="509" textLength="169">The mortality rate</text>
                <text x="2428" y="541" textLength="158">has increased in</text>
                <text x="2431" y="572.500" textLength="216">United States by 8.2%</text>
                <text x="2496" y="906.500" textLength="169">The mortality rate</text>
                <text x="2496" y="938.500" textLength="158">has increased in</text>
                <text x="2499" y="970" textLength="128">NE by 14.5%</text>
              </g>
              <path d="M2341 1145.500h28" stroke="#cc662a" stroke-width="7" />
              <path d="M2423 1145.500h29" stroke="#3072ad" stroke-width="7" />
              <g class="key">
                <text x="2383" y="1151" textLength="26">NE</text>
                <text x="2466" y="1151" textLength="118">United States</text>
              </g>
            </svg>
          </section>
        </div>

        <p class="foot">
          <span v-fit="1621" class="ln">Midlife Mortality Rate: Deaths per 100,000 for adults ages 25-64 due to All Cause for three year periods for counties (left) and state and nation (right).</span>
          <svg width="24" height="24" viewBox="0 0 24 24">
            <circle cx="12" cy="12" r="12" fill="#3072ad" />
            <circle cx="12" cy="6.300" r="2" fill="#fff" />
            <path d="M9 10h4.700v6.500h1.500V19H9v-2.500h1.500v-4H9z" fill="#fff" />
          </svg>
        </p>
        <div class="source">
          <span v-fit="260" class="ln">Data Source: CDC WONDER</span>
          <span v-fit="893" class="ln">Analysis: The Rensselaer Institute for Data Exploration and Applications (<a>The Rensselaer IDEA</a>)</span>
        </div>
        <div class="dots"><i class="dot big"></i><i class="dot"></i><i class="dot"></i><i class="dot"></i></div>
      </main>
    </div>

    <svg class="overlay" viewBox="0 0 2880 1640" width="2880" height="1640">
      <g fill="#56bcc3">
        <path d="M50 745L52.800 753L36.800 804L52.800 855L50 863L30.500 804Z" />
        <path d="M67.500 745L70.300 753L54.300 804L70.300 855L67.500 863L48 804Z" />
        <path d="M2813 745L2810.200 753L2826.200 804L2810.200 855L2813 863L2832.500 804Z" />
        <path d="M2830 745L2827.200 753L2843.200 804L2827.200 855L2830 863L2849.500 804Z" />
      </g>
      <ellipse class="ring" cx="405" cy="668.500" rx="367" ry="627.500" />
    </svg>
  </div>
</template>

<style>
body { margin: 0; background: #f7f7f7; }
</style>

<style scoped>
.page { position: relative; width: 2880px; height: 1640px; overflow: hidden; background: #f7f7f7; color: #333; font-family: Roboto, "Liberation Sans", sans-serif; }
h1, h2, h3, p, ul { margin: 0; padding: 0; font-weight: 400; }
.ln { display: block; width: max-content; white-space: nowrap; }
svg { display: block; }
.top { display: flex; justify-content: space-between; height: 122px; padding: 0 116px 0 58px; }
.brand { padding-top: 24px; font: 300 56px/66px Lato, sans-serif; color: #565253; -webkit-text-stroke: 0.8px #565253; }
.filters { display: flex; align-items: flex-start; width: 1158px; height: 98px; padding-left: 42px; background: #565253; border-radius: 0 0 20px 20px; }
.lab { padding-top: 25px; color: #f7f7f7; font-size: 27px; line-height: 32px; }
.lab-state { width: 90px; }
.lab-cause { width: 231px; margin-left: 37px; }
.select { display: flex; align-items: center; justify-content: space-between; box-sizing: border-box; width: 346px; height: 48px; margin-top: 24px; padding: 2px 24px 0 8px; background: #fff; color: #333; font: 28px/46px "Liberation Sans", Arial, sans-serif; }
.caret { width: 0; height: 0; margin-top: -2px; border: 8px solid transparent; border-top: 9px solid #333; border-bottom: 0; }
.body { display: flex; height: 1496px; }
.side { box-sizing: border-box; width: 690px; margin-left: 58px; padding: 40px 54px 0; background: #565253; color: #fff; }
.question { box-sizing: border-box; height: 138px; padding: 26px 24px 0; background: #f7f7f7; color: #565253; font-size: 28px; line-height: 30px; }
.para { margin-top: 20px; padding-left: 1px; font-size: 25px; line-height: 34px; font-weight: 500; }
.para.first { margin-top: 65px; }
.causes { margin-top: 20px; font-size: 25px; line-height: 34px; font-weight: 500; list-style: none; }
.causes li { display: flex; align-items: center; padding-left: 27px; }
.causes li::before { content: ""; width: 9px; height: 9px; margin-right: 14px; border-radius: 50%; background: #fff; }
.hint { margin-top: 19px; padding-left: 1px; font-size: 21px; line-height: 22px; }
b { font-weight: 900; }
.hint em { color: #56bcc3; font-style: normal; font-weight: 700; }
.rpi { margin: 40px 0 0 52px; }
.seal { font: 700 8.5px "Liberation Serif", serif; fill: #fff; }
.year { font-size: 10px; text-anchor: middle; }
.wordmark { font: 102px "Liberation Serif", serif; fill: #fff; stroke: #fff; stroke-width: 1.6; }
.main { display: flex; flex-direction: column; width: 1948px; margin-left: 32px; }
.title { margin: 47px 0 0 7px; font-size: 35px; line-height: 40px; }
.tabs { display: grid; grid-template-columns: repeat(6, 292px); justify-content: space-between; margin-top: 41px; }
.tab { height: 66px; padding: 2px 0 0; border: 2px solid #565253; background: transparent; color: #565253; font: 22.5px/58px Roboto, sans-serif; letter-spacing: 1.8px; }
.tab.on { background: #565253; border-color: #f7f7f7; color: #fff; font-weight: 500; }
.charts { display: flex; box-sizing: border-box; height: 909px; padding-top: 68px; }
.charts svg { margin-top: -1px; }
.national { width: 1328px; }
.charts h3 { font-size: 28px; line-height: 30px; }
.national h3 { padding-left: 37px; }
.trend svg { margin-left: 1px; }
.maplegend text { font: 18px "Liberation Sans", Arial, sans-serif; fill: #222; }
.maplegend .num { font-size: 17px; }
.axis text { font: 17px "DejaVu Serif", serif; fill: #565253; }
.axis .name { font-size: 21px; fill: #4a4a4a; }
.key text { font: 17px "DejaVu Serif", serif; fill: #000; }
.note text { font: 23px "Liberation Sans", Arial, sans-serif; fill: #f7f7f7; text-anchor: middle; }
.foot { display: flex; align-items: center; gap: 5px; padding-left: 1px; font-size: 25px; line-height: 30px; }
.source { margin-top: 21px; padding-left: 1px; color: #565253; font-size: 22px; line-height: 22px; }
.source a { color: #437dbb; }
.dots { display: flex; align-items: center; margin: auto 0 -6px 566px; height: 20px; }
.dot { width: 11px; height: 11px; margin: 0 0 2px 45px; border-radius: 50%; background: #3072ad; }
.dot.big { width: 20px; height: 20px; margin: 0 -4px 0 0; }
.overlay { position: absolute; left: 0; top: 0; pointer-events: none; }
.ring { fill: none; stroke: #ec4125; stroke-width: 10; filter: drop-shadow(0 3px 4px rgba(0, 0, 0, .45)); }
</style>
